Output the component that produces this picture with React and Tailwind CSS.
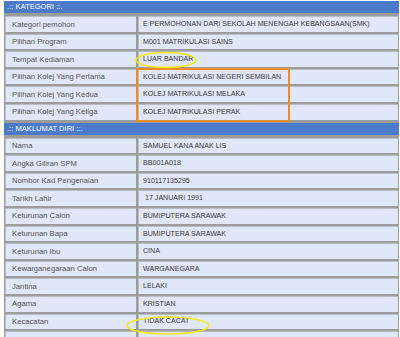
import React from 'react';

const kategori = [
  ['Kategori pemohon', 'E PERMOHONAN DARI SEKOLAH MENENGAH KEBANGSAAN(SMK)'],
  ['Pilihan Program', 'M001 MATRIKULASI SAINS'],
  ['Tempat Kediaman', 'LUAR BANDAR'],
  ['Pilihan Kolej Yang Pertama', 'KOLEJ MATRIKULASI NEGERI SEMBILAN'],
  ['Pilihan Kolej Yang Kedua', 'KOLEJ MATRIKULASI MELAKA'],
  ['Pilihan Kolej Yang Ketiga', 'KOLEJ MATRIKULASI PERAK'],
];

const maklumat = [
  ['Nama', 'SAMUEL KANA ANAK LIS'],
  ['Angka Giliran SPM', 'BB001A018'],
  ['Nombor Kad Pengenalan', '910117135295'],
  ['Tarikh Lahir', '\u00a017 JANUARI 1991'],
  ['Keturunan Calon', 'BUMIPUTERA SARAWAK'],
  ['Keturunan Bapa', 'BUMIPUTERA SARAWAK'],
  ['Keturunan Ibu', 'CINA'],
  ['Kewarganegaraan Calon', 'WARGANEGARA'],
  ['Jantina', 'LELAKI'],
  ['Agama', 'KRISTIAN'],
  ['Kecacatan', 'TIDAK CACAT'],
  ['', ''],
];

// Section: blue title bar then label / value rows
const Section = ({ title, rows }) => (
  <div className="flex flex-col gap-[3px]">
    <div className="h-[12px] bg-[#4b7bca] flex items-center pl-[3px] text-[7.6px] leading-none text-white">
      {title}
    </div>
    <div className="grid grid-cols-[131px_1fr] gap-x-[2px] gap-y-[2px] px-[1px]">
      {rows.map(([label, value], i) => (
        <React.Fragment key={i}>
          <div className="h-[15.6px] bg-[#dfe7f8] border-t border-l border-[#b8bcc4] flex items-center pl-[6px] text-[7.7px] text-[#555555]">
            {label}
          </div>
          <div className="h-[15.6px] bg-[#dfe7f8] border-t border-l border-[#b8bcc4] flex items-center pl-[4px] text-[7.1px] text-[#3c3c3c] whitespace-pre">
            {value}
          </div>
        </React.Fragment>
      ))}
    </div>
  </div>
);

export default function App() {
  return (
    <div
      className="relative w-[400px] h-[337px] overflow-hidden bg-white pt-[1px] pl-[4px] pr-[1px]"
      style={{ fontFamily: '"Liberation Sans", Arial, sans-serif' }}
    >
      <div className="flex flex-col gap-[3px] bg-[#9c9c9c]">
        <Section title=".:: KATEGORI ::." rows={kategori} />
        <Section title=".:: MAKLUMAT DIRI ::." rows={maklumat} />
      </div>

      {/* annotations drawn over the table */}
      <div className="absolute left-[136px] top-[68px] w-[154px] h-[54px] border-2 border-[#f08a24]" />
      <svg className="absolute left-[134px] top-[51px]" width="64" height="18">
        <ellipse cx="32" cy="9" rx="30" ry="7.5" fill="none" stroke="#f2ea10" strokeWidth="1.6" />
      </svg>
      <svg className="absolute left-[125px] top-[315px]" width="86" height="21">
        <ellipse cx="43" cy="10.5" rx="41" ry="8.5" fill="none" stroke="#f2ea10" strokeWidth="1.6" />
      </svg>
    </div>
  );
}
